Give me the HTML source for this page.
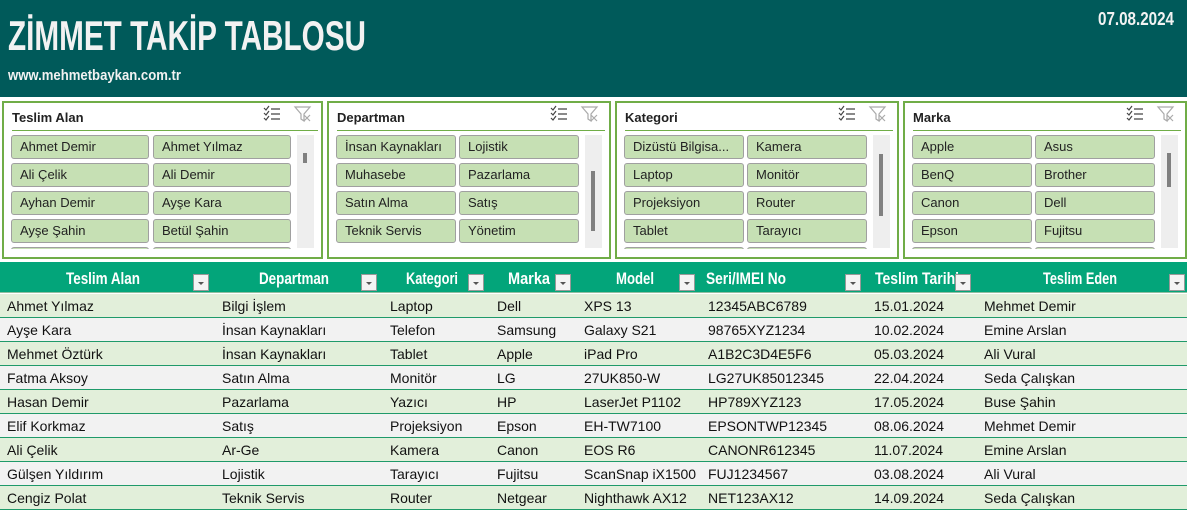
<!DOCTYPE html>
<html><head><meta charset="utf-8"><style>
*{margin:0;padding:0;box-sizing:border-box}
body{width:1187px;height:500px;overflow:hidden;background:#fff;font-family:"Liberation Sans",sans-serif;position:relative}
.top{position:absolute;left:0;top:0;width:1187px;height:97px;background:#005a5a}
.sl{position:absolute;top:101px;height:158px;border:2px solid #70ad47;background:#fff}
.sl .t{position:absolute;left:8px;top:7px;font-size:13px;font-weight:bold;color:#222}
.sl .ln{position:absolute;left:8px;top:27px;height:1px;background:#70ad47}
.b{position:absolute;height:24px;background:#c6e0b4;border:1px solid #a0a0a0;border-radius:3px;font-size:13px;color:#222;padding-left:8px;line-height:22px;white-space:nowrap;overflow:hidden}
.sb{position:absolute;top:32px;width:17px;height:113px;background:#eee}
.sb i{position:absolute;left:6px;width:4px;background:#808080}
.clip{position:absolute;left:0;top:0;width:100%;height:146px;overflow:hidden}
.row{position:absolute;left:0;width:1187px;height:24px;border-bottom:1px solid #1f9a6a;font-size:14px;color:#111}
.row span{position:absolute;top:4px;white-space:nowrap}
.g{background:#e2efda}.w{background:#f2f2f2}
.hd{position:absolute;left:0;top:262px;width:1187px;height:31px;background:#03a57a;border-bottom:1px solid #8fbf9f}
.dd{position:absolute;top:12px;width:16px;height:17px;background:#f4f4f4;border:1px solid #999}
.dd:after{content:"";position:absolute;left:4px;top:7px;border-left:3px solid transparent;border-right:3px solid transparent;border-top:3px solid #555}
</style></head><body>
<div class="top">
<svg width="1187" height="97" style="position:absolute;left:0;top:0">
<text x="8" y="50" fill="#f2f2f2" font-family="Liberation Sans" font-weight="bold" font-size="42" textLength="358" lengthAdjust="spacingAndGlyphs">ZİMMET TAKİP TABLOSU</text>
<text x="8" y="80" fill="#f2f2f2" font-family="Liberation Sans" font-weight="bold" font-size="15" textLength="173" lengthAdjust="spacingAndGlyphs">www.mehmetbaykan.com.tr</text>
<text x="1098" y="25" fill="#f2f2f2" font-family="Liberation Sans" font-weight="bold" font-size="18" textLength="76" lengthAdjust="spacingAndGlyphs">07.08.2024</text>
</svg></div>

<div class="sl" style="left:2px;width:321px"><div class="t">Teslim Alan</div><div class="ln" style="width:306px"></div>
<div class="clip"><div class="b" style="left:7px;top:32px;width:138px">Ahmet Demir</div><div class="b" style="left:149px;top:32px;width:138px">Ahmet Yılmaz</div>
<div class="b" style="left:7px;top:60px;width:138px">Ali Çelik</div><div class="b" style="left:149px;top:60px;width:138px">Ali Demir</div>
<div class="b" style="left:7px;top:88px;width:138px">Ayhan Demir</div><div class="b" style="left:149px;top:88px;width:138px">Ayşe Kara</div>
<div class="b" style="left:7px;top:116px;width:138px">Ayşe Şahin</div><div class="b" style="left:149px;top:116px;width:138px">Betül Şahin</div>
<div class="b" style="left:7px;top:144px;width:138px"></div><div class="b" style="left:149px;top:144px;width:138px"></div></div>
<div class="sb" style="left:293px"><i style="top:18px;height:10px"></i></div></div>

<div class="sl" style="left:327px;width:284px"><div class="t">Departman</div><div class="ln" style="width:268px"></div>
<div class="clip"><div class="b" style="left:7px;top:32px;width:120px">İnsan Kaynakları</div><div class="b" style="left:130px;top:32px;width:120px">Lojistik</div>
<div class="b" style="left:7px;top:60px;width:120px">Muhasebe</div><div class="b" style="left:130px;top:60px;width:120px">Pazarlama</div>
<div class="b" style="left:7px;top:88px;width:120px">Satın Alma</div><div class="b" style="left:130px;top:88px;width:120px">Satış</div>
<div class="b" style="left:7px;top:116px;width:120px">Teknik Servis</div><div class="b" style="left:130px;top:116px;width:120px">Yönetim</div></div>
<div class="sb" style="left:256px"><i style="top:36px;height:60px"></i></div></div>

<div class="sl" style="left:615px;width:284px"><div class="t">Kategori</div><div class="ln" style="width:268px"></div>
<div class="clip"><div class="b" style="left:7px;top:32px;width:120px">Dizüstü Bilgisa...</div><div class="b" style="left:130px;top:32px;width:120px">Kamera</div>
<div class="b" style="left:7px;top:60px;width:120px">Laptop</div><div class="b" style="left:130px;top:60px;width:120px">Monitör</div>
<div class="b" style="left:7px;top:88px;width:120px">Projeksiyon</div><div class="b" style="left:130px;top:88px;width:120px">Router</div>
<div class="b" style="left:7px;top:116px;width:120px">Tablet</div><div class="b" style="left:130px;top:116px;width:120px">Tarayıcı</div>
<div class="b" style="left:7px;top:144px;width:120px"></div><div class="b" style="left:130px;top:144px;width:120px"></div></div>
<div class="sb" style="left:256px"><i style="top:19px;height:62px"></i></div></div>

<div class="sl" style="left:903px;width:284px"><div class="t">Marka</div><div class="ln" style="width:268px"></div>
<div class="clip"><div class="b" style="left:7px;top:32px;width:120px">Apple</div><div class="b" style="left:130px;top:32px;width:120px">Asus</div>
<div class="b" style="left:7px;top:60px;width:120px">BenQ</div><div class="b" style="left:130px;top:60px;width:120px">Brother</div>
<div class="b" style="left:7px;top:88px;width:120px">Canon</div><div class="b" style="left:130px;top:88px;width:120px">Dell</div>
<div class="b" style="left:7px;top:116px;width:120px">Epson</div><div class="b" style="left:130px;top:116px;width:120px">Fujitsu</div>
<div class="b" style="left:7px;top:144px;width:120px"></div><div class="b" style="left:130px;top:144px;width:120px"></div></div>
<div class="sb" style="left:256px"><i style="top:18px;height:34px"></i></div></div>

<svg width="1187" height="40" style="position:absolute;left:0;top:100px">
<g id="ic" fill="none" stroke-width="1.2">
<g stroke="#444"><path d="M264 8l2 2 3-4M264 13l2 2 3-4M264 18l2 2 3-4M271 9h9M271 14h9M271 19h9"/></g>
<g stroke="#aaa"><path d="M295 7h15l-6 7v7l-3-2v-5z M304 15l6 6M310 15l-6 6"/></g>
</g>
<use href="#ic" x="287"/><use href="#ic" x="575"/><use href="#ic" x="863"/>
</svg>

<div class="hd">
<svg width="1187" height="31" style="position:absolute;left:0;top:0">
<g fill="#fff" font-family="Liberation Sans" font-weight="bold" font-size="17" text-anchor="middle">
<text x="103" y="22" textLength="74" lengthAdjust="spacingAndGlyphs">Teslim Alan</text>
<text x="294" y="22" textLength="70" lengthAdjust="spacingAndGlyphs">Departman</text>
<text x="432" y="22" textLength="52" lengthAdjust="spacingAndGlyphs">Kategori</text>
<text x="529" y="22" textLength="42" lengthAdjust="spacingAndGlyphs">Marka</text>
<text x="635" y="22" textLength="38" lengthAdjust="spacingAndGlyphs">Model</text>
<text x="746" y="22" textLength="80" lengthAdjust="spacingAndGlyphs">Seri/IMEI No</text>
<text x="917" y="22" textLength="84" lengthAdjust="spacingAndGlyphs">Teslim Tarihi</text>
<text x="1080" y="22" textLength="74" lengthAdjust="spacingAndGlyphs">Teslim Eden</text>
</g></svg>
<div class="dd" style="left:193px"></div><div class="dd" style="left:361px"></div><div class="dd" style="left:468px"></div><div class="dd" style="left:555px"></div><div class="dd" style="left:679px"></div><div class="dd" style="left:845px"></div><div class="dd" style="left:955px"></div><div class="dd" style="left:1169px"></div>
</div>

<div class="row g" style="top:294px"><span style="left:7px">Ahmet Yılmaz</span><span style="left:222px">Bilgi İşlem</span><span style="left:390px">Laptop</span><span style="left:497px">Dell</span><span style="left:584px">XPS 13</span><span style="left:708px">12345ABC6789</span><span style="left:874px">15.01.2024</span><span style="left:984px">Mehmet Demir</span></div>
<div class="row w" style="top:318px"><span style="left:7px">Ayşe Kara</span><span style="left:222px">İnsan Kaynakları</span><span style="left:390px">Telefon</span><span style="left:497px">Samsung</span><span style="left:584px">Galaxy S21</span><span style="left:708px">98765XYZ1234</span><span style="left:874px">10.02.2024</span><span style="left:984px">Emine Arslan</span></div>
<div class="row g" style="top:342px"><span style="left:7px">Mehmet Öztürk</span><span style="left:222px">İnsan Kaynakları</span><span style="left:390px">Tablet</span><span style="left:497px">Apple</span><span style="left:584px">iPad Pro</span><span style="left:708px">A1B2C3D4E5F6</span><span style="left:874px">05.03.2024</span><span style="left:984px">Ali Vural</span></div>
<div class="row w" style="top:366px"><span style="left:7px">Fatma Aksoy</span><span style="left:222px">Satın Alma</span><span style="left:390px">Monitör</span><span style="left:497px">LG</span><span style="left:584px">27UK850-W</span><span style="left:708px">LG27UK85012345</span><span style="left:874px">22.04.2024</span><span style="left:984px">Seda Çalışkan</span></div>
<div class="row g" style="top:390px"><span style="left:7px">Hasan Demir</span><span style="left:222px">Pazarlama</span><span style="left:390px">Yazıcı</span><span style="left:497px">HP</span><span style="left:584px">LaserJet P1102</span><span style="left:708px">HP789XYZ123</span><span style="left:874px">17.05.2024</span><span style="left:984px">Buse Şahin</span></div>
<div class="row w" style="top:414px"><span style="left:7px">Elif Korkmaz</span><span style="left:222px">Satış</span><span style="left:390px">Projeksiyon</span><span style="left:497px">Epson</span><span style="left:584px">EH-TW7100</span><span style="left:708px">EPSONTWP12345</span><span style="left:874px">08.06.2024</span><span style="left:984px">Mehmet Demir</span></div>
<div class="row g" style="top:438px"><span style="left:7px">Ali Çelik</span><span style="left:222px">Ar-Ge</span><span style="left:390px">Kamera</span><span style="left:497px">Canon</span><span style="left:584px">EOS R6</span><span style="left:708px">CANONR612345</span><span style="left:874px">11.07.2024</span><span style="left:984px">Emine Arslan</span></div>
<div class="row w" style="top:462px"><span style="left:7px">Gülşen Yıldırım</span><span style="left:222px">Lojistik</span><span style="left:390px">Tarayıcı</span><span style="left:497px">Fujitsu</span><span style="left:584px">ScanSnap iX1500</span><span style="left:708px">FUJ1234567</span><span style="left:874px">03.08.2024</span><span style="left:984px">Ali Vural</span></div>
<div class="row g" style="top:486px"><span style="left:7px">Cengiz Polat</span><span style="left:222px">Teknik Servis</span><span style="left:390px">Router</span><span style="left:497px">Netgear</span><span style="left:584px">Nighthawk AX12</span><span style="left:708px">NET123AX12</span><span style="left:874px">14.09.2024</span><span style="left:984px">Seda Çalışkan</span></div>
</body></html>
